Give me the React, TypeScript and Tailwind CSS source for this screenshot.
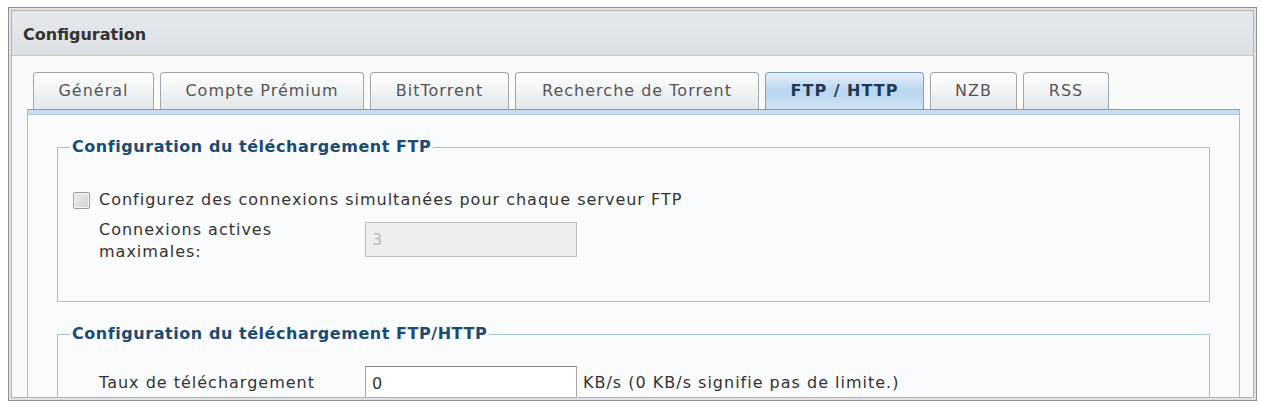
const tabs = [
  { label: "Général", w: "w-[121px]" },
  { label: "Compte Prémium", w: "w-[204px]" },
  { label: "BitTorrent", w: "w-[139px]" },
  { label: "Recherche de Torrent", w: "w-[244px]" },
  { label: "FTP / HTTP", w: "w-[159px]", active: true },
  { label: "NZB", w: "w-[87px]" },
  { label: "RSS", w: "w-[86px]" },
];

const Tab = ({ label, w, active }: { label: string; w: string; active?: boolean }) => {
  if (active) {
    return (
      <div
        className={`${w} h-[37px] rounded-t-[4px] border border-b-0 border-[#7f9fbf] bg-gradient-to-b from-[#e6f0f9] via-[#b9d5ef] to-[#cfe2f3] flex items-center justify-center text-[16px] font-bold tracking-[1px] text-[#1e3a56]`}
      >
        {label}
      </div>
    );
  }
  return (
    <div
      className={`${w} h-[37px] rounded-t-[4px] border border-b-0 border-[#9ea6ae] bg-gradient-to-b from-white to-[#e3e7eb] flex items-center justify-center text-[16px] tracking-[1px] text-[#555]`}
    >
      {label}
    </div>
  );
};

const Legend = ({ children }: { children: string }) => (
  <legend className="ml-[-3px] px-[2px] leading-[20px] text-[16px] font-bold tracking-[0.55px] text-[#1c4a72]">
    {children}
  </legend>
);

export default function App() {
  return (
    <div className="w-[1262px] h-[404px] bg-white overflow-hidden pt-[7px] pl-[8px] font-['DejaVu_Sans',sans-serif] text-[#333]">
      <div className="w-[1249px] h-[394px] border border-[#8f8f8f] bg-[#e2e2e2] p-[2px] overflow-hidden">
        <div className="h-full border border-[#b3b3b3] bg-[#fafafa] flex flex-col overflow-hidden">
          {/* window title */}
          <div className="h-[45px] shrink-0 border-b border-[#c3c8cd] bg-gradient-to-b from-[#e6e9ec] to-[#dce0e4] flex items-center pl-[11px] pt-[3px] text-[16px] font-bold text-[#333]">
            Configuration
          </div>

          <div className="flex-1 pl-[15px] pt-[16px]">
            <div className="flex gap-[6px] pl-[6px] items-end">
              {tabs.map((t) => (
                <Tab key={t.label} {...t} />
              ))}
            </div>

            <div className="w-[1213px] border-x border-[#a3bcd2] bg-[#fafbfc]">
              <div className="h-[6px] border-t border-[#7c9fbf] bg-[#c9ddef] border-b border-b-[#adc6dc]" />

              <div className="px-[29px] pt-[22px] pb-[40px] text-[16px] tracking-[1px]">
                <fieldset className="border border-[#a8bfd4] px-[15px] pt-[32px] pb-[38px]">
                  <Legend>Configuration du téléchargement FTP</Legend>
                  <div className="flex items-center h-[22px]">
                    <span className="w-[17px] h-[17px] rounded-[2px] border border-[#9c9c9c] bg-gradient-to-br from-[#ececec] to-[#d3d3d3] shadow-[inset_0_0_0_1px_#f6f6f6]" />
                    <span className="ml-[9px] leading-[22px]">
                      Configurez des connexions simultanées pour chaque serveur FTP
                    </span>
                  </div>
                  <div className="flex items-start mt-[8px] pl-[26px]">
                    <div className="w-[266px] leading-[22px]">Connexions actives maximales:</div>
                    <input
                      disabled
                      defaultValue="3"
                      className="mt-[3px] w-[212px] h-[35px] border border-[#bdbdbd] bg-[#eeeeee] pl-[6px] text-[16px] text-[#bcbcbc] font-['DejaVu_Sans',sans-serif]"
                    />
                  </div>
                </fieldset>

                <fieldset className="mt-[22px] border border-[#a8bfd4] px-[15px] pt-[22px] pb-[30px]">
                  <Legend>Configuration du téléchargement FTP/HTTP</Legend>
                  <div className="flex items-start pl-[26px]">
                    <div className="w-[266px] mt-[6px] leading-[22px]">
                      Taux de téléchargement maximal de téléchargement:
                    </div>
                    <input
                      defaultValue="0"
                      className="w-[212px] h-[35px] border border-[#a7a7a7] border-t-[#8c8c8c] bg-white pl-[6px] text-[16px] text-[#333] font-['DejaVu_Sans',sans-serif]"
                    />
                    <span className="ml-[6px] mt-[6px] leading-[22px]">KB/s (0 KB/s signifie pas de limite.)</span>
                  </div>
                </fieldset>
              </div>
            </div>
          </div>
        </div>
      </div>
    </div>
  );
}
